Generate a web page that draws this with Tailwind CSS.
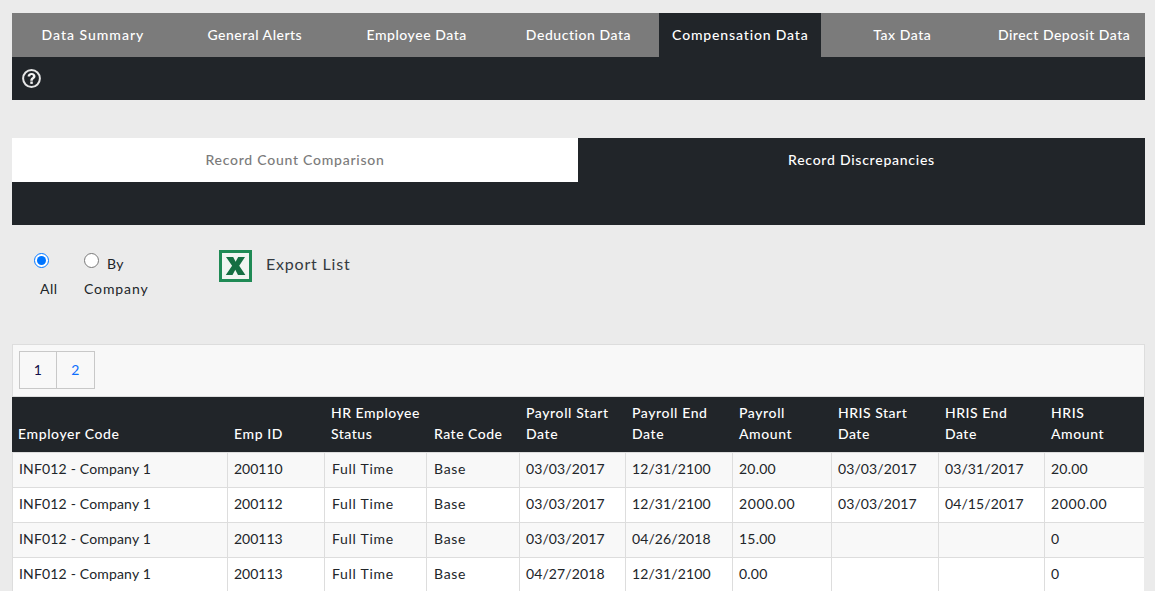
<!DOCTYPE html>
<html lang="en">
<head>
    <meta charset="UTF-8">
    <title>Compensation Data</title>
    <script src="https://cdn.jsdelivr.net/npm/@tailwindcss/browser@4"></script>
</head>
<body class="bg-[#ebebeb] font-['Lato',sans-serif] text-[14px] text-[#212529] tracking-[0.45px] overflow-hidden h-[591px]">
    <div class="pl-3 pr-[10px] pt-[13px]">
        <!-- Main tabs -->
        <div class="flex h-[44px] bg-[#7b7b7b] text-white font-medium items-stretch tracking-[1px]">
            <div class="flex-1 flex items-center justify-center pb-[2px]">Data Summary</div>
            <div class="flex-1 flex items-center justify-center pb-[2px] tracking-[0.5px]">General Alerts</div>
            <div class="flex-1 flex items-center justify-center pb-[2px] tracking-[0.55px]">Employee Data</div>
            <div class="flex-1 flex items-center justify-center pb-[2px] tracking-[0.55px]">Deduction Data</div>
            <div class="flex-1 flex items-center justify-center pb-[2px] bg-[#212529] tracking-[0.85px]">Compensation Data</div>
            <div class="flex-1 flex items-center justify-center pb-[2px] tracking-[0.55px]">Tax Data</div>
            <div class="flex-1 flex items-center justify-center pb-[2px] tracking-[0.5px]">Direct Deposit Data</div>
        </div>
        <div class="h-[43px] bg-[#212529] flex items-center pl-[10px]">
            <svg width="19" height="19" viewBox="0 0 19 19" fill="none">
                <circle cx="9.500" cy="9.500" r="8.400" stroke="#e6e6e6" stroke-width="2"/>
                <path d="M5.600 7.500C5.600 5.200 7.300 4 9.600 4s3.900 1.300 3.900 3.200c0 2.600-2.700 2.600-2.700 4.500H8.300c0-3 2.600-3 2.600-4.400 0-.8-.5-1.200-1.300-1.200-.9 0-1.400.6-1.400 1.500z" fill="#f2f2f2"/>
                <rect x="8.300" y="12.500" width="2.500" height="2.400" fill="#f2f2f2"/>
            </svg>
        </div>

        <!-- Sub tabs -->
        <div class="flex h-[44px] mt-[38px] font-medium items-stretch tracking-[0.75px]">
            <div class="w-[566px] flex items-center justify-center pb-[2px] bg-white text-[#7b7b7b]">Record Count Comparison</div>
            <div class="flex-1 flex items-center justify-center pb-[2px] bg-[#212529] text-white">Record Discrepancies</div>
        </div>
        <div class="h-[43px] bg-[#212529]"></div>

        <!-- Filters -->
        <div class="flex h-[119px] items-start">
            <div class="w-[72px] pl-[22px] pt-[28px]">
                <input type="radio" name="scope" checked class="block w-[15px] h-[15px] accent-[#0075ff] m-0">
                <div class="mt-[10px] ml-[6px] leading-[21px]">All</div>
            </div>
            <div class="w-[135px] pt-[25px]">
                <div class="flex items-start h-[25px]">
                    <input type="radio" name="scope" class="block w-[15px] h-[15px] accent-[#0075ff] m-0 mt-[3px]">
                    <span class="ml-[8px] mt-[3px] leading-[21px]">By</span>
                </div>
                <div class="mt-[3px] leading-[21px] tracking-[0.9px]">Company</div>
            </div>
            <div class="flex items-center pt-[25px]">
                <svg width="33" height="32" viewBox="0 0 33 32">
                    <rect x="1.500" y="1.500" width="30" height="29" fill="#f1f5f1" stroke="#1f8a55" stroke-width="3"/>
                    <path d="M7 7h7.200l2.400 4.700L19.200 7H26l-5.800 8.800L26.400 25h-7.400l-2.700-5.200L13.500 25H6.800l6.300-9.200z" fill="#156f42"/>
                </svg>
                <span class="ml-[14px] mb-[4px] text-[16px] tracking-[0.8px] text-[#343a40]">Export List</span>
            </div>
        </div>

        <!-- Pager -->
        <div class="h-[53px] bg-[#f8f8f8] border border-[#dddddd] pl-[6px] pt-[6px]">
            <div class="flex w-fit border border-[#c8c8c8] h-[38px]">
                <div class="w-[37px] flex items-center justify-center text-[#14104a] border-r border-[#c8c8c8] pb-[2px]">1</div>
                <div class="w-[37px] flex items-center justify-center text-[#0d6efd] pb-[2px]">2</div>
            </div>
        </div>

        <!-- Grid -->
        <table class="w-[1132px] table-fixed border-separate border-spacing-0">
            <colgroup>
                <col class="w-[216px]"><col class="w-[97px]"><col class="w-[102px]"><col class="w-[93px]"><col class="w-[106px]"><col class="w-[107px]"><col class="w-[99px]"><col class="w-[107px]"><col class="w-[106px]"><col class="w-[99px]">
            </colgroup>
            <thead class="bg-[#212529] text-white text-left tracking-[0.6px]">
                <tr class="h-[55px] align-bottom leading-[21px]">
                    <th class="font-medium pl-[6px] pr-[2px] pb-[8px]">Employer Code</th>
                    <th class="font-medium pl-[6px] pr-[2px] pb-[8px]">Emp ID</th>
                    <th class="font-medium pl-[6px] pr-[2px] pb-[8px] tracking-[0.5px]">HR Employee Status</th>
                    <th class="font-medium pl-[7px] pr-[2px] pb-[8px] tracking-[0.5px]">Rate Code</th>
                    <th class="font-medium pl-[6px] pr-[2px] pb-[8px]">Payroll Start Date</th>
                    <th class="font-medium pl-[6px] pr-[2px] pb-[8px]">Payroll End Date</th>
                    <th class="font-medium pl-[6px] pr-[2px] pb-[8px]">Payroll Amount</th>
                    <th class="font-medium pl-[6px] pr-[2px] pb-[8px] tracking-[0.5px]">HRIS Start Date</th>
                    <th class="font-medium pl-[6px] pr-[2px] pb-[8px] tracking-[0.5px]">HRIS End Date</th>
                    <th class="font-medium pl-[6px] pr-[12px] pb-[8px]">HRIS Amount</th>
                </tr>
            </thead>
            <tbody class="tracking-[0.2px]">
                <tr class="h-[35px] bg-[#f8f8f8]">
                    <td class="pl-[6px] pb-[3px] border-l border-r border-t border-[#dddddd] tracking-[0.17px]">INF012 - Company 1</td>
                    <td class="pl-[6px] pb-[3px] border-r border-t border-[#dddddd] tracking-[0px]">200110</td>
                    <td class="pl-[7px] pb-[3px] border-r border-t border-[#dddddd] tracking-[0.7px]">Full Time</td>
                    <td class="pl-[7px] pb-[3px] border-r border-t border-[#dddddd] tracking-[0.7px]">Base</td>
                    <td class="pl-[6px] pb-[3px] border-r border-t border-[#dddddd] tracking-[0.1px]">03/03/2017</td>
                    <td class="pl-[6px] pb-[3px] border-r border-t border-[#dddddd] tracking-[0.1px]">12/31/2100</td>
                    <td class="pl-[6px] pb-[3px] border-r border-t border-[#dddddd]">20.00</td>
                    <td class="pl-[6px] pb-[3px] border-r border-t border-[#dddddd] tracking-[0.1px]">03/03/2017</td>
                    <td class="pl-[6px] pb-[3px] border-r border-t border-[#dddddd] tracking-[0.1px]">03/31/2017</td>
                    <td class="pl-[6px] pb-[3px] border-t border-[#dddddd]">20.00</td>
                </tr>
                <tr class="h-[35px] bg-white">
                    <td class="pl-[6px] pb-[3px] border-l border-r border-t border-[#dddddd] tracking-[0.17px]">INF012 - Company 1</td>
                    <td class="pl-[6px] pb-[3px] border-r border-t border-[#dddddd] tracking-[0px]">200112</td>
                    <td class="pl-[7px] pb-[3px] border-r border-t border-[#dddddd] tracking-[0.7px]">Full Time</td>
                    <td class="pl-[7px] pb-[3px] border-r border-t border-[#dddddd] tracking-[0.7px]">Base</td>
                    <td class="pl-[6px] pb-[3px] border-r border-t border-[#dddddd] tracking-[0.1px]">03/03/2017</td>
                    <td class="pl-[6px] pb-[3px] border-r border-t border-[#dddddd] tracking-[0.1px]">12/31/2100</td>
                    <td class="pl-[6px] pb-[3px] border-r border-t border-[#dddddd] tracking-[0.6px]">2000.00</td>
                    <td class="pl-[6px] pb-[3px] border-r border-t border-[#dddddd] tracking-[0.1px]">03/03/2017</td>
                    <td class="pl-[6px] pb-[3px] border-r border-t border-[#dddddd] tracking-[0.1px]">04/15/2017</td>
                    <td class="pl-[6px] pb-[3px] border-t border-[#dddddd] tracking-[0.6px]">2000.00</td>
                </tr>
                <tr class="h-[35px] bg-[#f8f8f8]">
                    <td class="pl-[6px] pb-[3px] border-l border-r border-t border-[#dddddd] tracking-[0.17px]">INF012 - Company 1</td>
                    <td class="pl-[6px] pb-[3px] border-r border-t border-[#dddddd] tracking-[0px]">200113</td>
                    <td class="pl-[7px] pb-[3px] border-r border-t border-[#dddddd] tracking-[0.7px]">Full Time</td>
                    <td class="pl-[7px] pb-[3px] border-r border-t border-[#dddddd] tracking-[0.7px]">Base</td>
                    <td class="pl-[6px] pb-[3px] border-r border-t border-[#dddddd] tracking-[0.1px]">03/03/2017</td>
                    <td class="pl-[6px] pb-[3px] border-r border-t border-[#dddddd] tracking-[0.1px]">04/26/2018</td>
                    <td class="pl-[6px] pb-[3px] border-r border-t border-[#dddddd]">15.00</td>
                    <td class="pl-[6px] pb-[3px] border-r border-t border-[#dddddd]"></td>
                    <td class="pl-[6px] pb-[3px] border-r border-t border-[#dddddd]"></td>
                    <td class="pl-[6px] pb-[3px] border-t border-[#dddddd]">0</td>
                </tr>
                <tr class="h-[35px] bg-white">
                    <td class="pl-[6px] pb-[3px] border-l border-r border-t border-[#dddddd] tracking-[0.17px]">INF012 - Company 1</td>
                    <td class="pl-[6px] pb-[3px] border-r border-t border-[#dddddd] tracking-[0px]">200113</td>
                    <td class="pl-[7px] pb-[3px] border-r border-t border-[#dddddd] tracking-[0.7px]">Full Time</td>
                    <td class="pl-[7px] pb-[3px] border-r border-t border-[#dddddd] tracking-[0.7px]">Base</td>
                    <td class="pl-[6px] pb-[3px] border-r border-t border-[#dddddd] tracking-[0.1px]">04/27/2018</td>
                    <td class="pl-[6px] pb-[3px] border-r border-t border-[#dddddd] tracking-[0.1px]">12/31/2100</td>
                    <td class="pl-[6px] pb-[3px] border-r border-t border-[#dddddd]">0.00</td>
                    <td class="pl-[6px] pb-[3px] border-r border-t border-[#dddddd]"></td>
                    <td class="pl-[6px] pb-[3px] border-r border-t border-[#dddddd]"></td>
                    <td class="pl-[6px] pb-[3px] border-t border-[#dddddd]">0</td>
                </tr>
            </tbody>
        </table>
    </div>
</body>
</html>
